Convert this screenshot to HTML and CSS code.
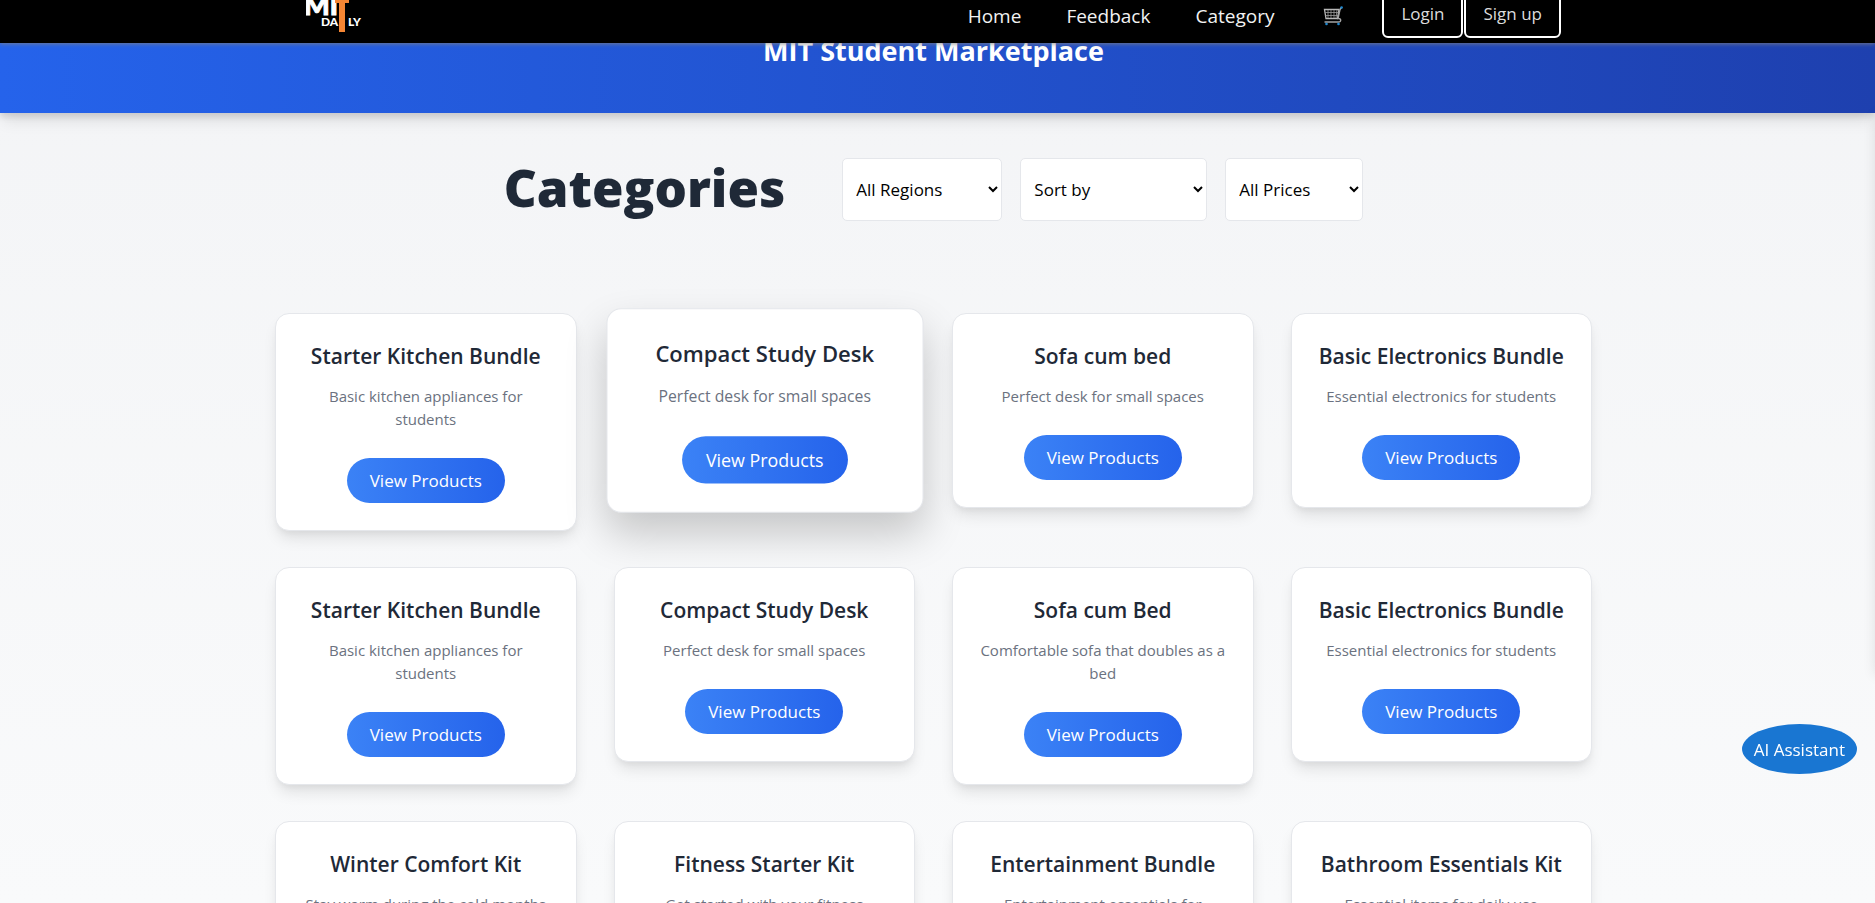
FILE: index.html
```html
<!DOCTYPE html>
<html lang="en">
<head>
<meta charset="utf-8">
<meta name="viewport" content="width=device-width, initial-scale=1">
<title>MIT Student Marketplace</title>
<link rel="stylesheet" href="styles.css">
</head>
<body>
<header class="navbar">
  <div class="navbar-inner">
    <a class="logo" href="#" aria-label="MIT Daily">
      <svg width="58" height="43" viewBox="0 0 58 43">
        <text class="logo-big" x="-2" y="15">MI</text>
        <rect x="29" y="0" width="14" height="3" fill="#f58634"/>
        <rect x="33" y="0" width="6" height="32" fill="#f58634"/>
        <text class="logo-small" x="15" y="26">DA</text>
        <text class="logo-small" x="42" y="26">LY</text>
      </svg>
    </a>
    <nav class="menu">
      <a href="#">Home</a>
      <a href="#">Feedback</a>
      <a href="#">Category</a>
      <a href="#" class="cart" aria-label="Cart">
        <svg width="20" height="20" viewBox="0 0 20 20" fill="none">
          <path d="M1.500 3.500H16L14.500 12.500H3z" stroke="#b8b8b8" stroke-width="1.300"/>
          <path d="M5 4v8M8 4v8M11 4v8M14 4l-1 8M2 6.500h13.500M2.500 9.500h12.500" stroke="#9a9a9a" stroke-width=".8"/>
          <path d="M18.500 1.500L17 3.500L15 12.500C18.500 12 18.500 16 15.500 16H1.500" stroke="#a5a5a5" stroke-width="1.400"/>
          <circle cx="3.500" cy="18" r="1.300" fill="#1e88d0"/>
          <circle cx="15.500" cy="18" r="1.300" fill="#1e88d0"/>
          <circle cx="18.600" cy="1.500" r="1.300" fill="#1e88d0"/>
        </svg>
      </a>
    </nav>
    <div class="auth">
      <button type="button" class="auth-button">Login</button>
      <button type="button" class="auth-button">Sign up</button>
    </div>
  </div>
</header>

<section class="banner">
  <h1 class="banner-title">MIT Student Marketplace</h1>
</section>

<main class="page">
  <div class="toolbar">
    <h2 class="page-title">Categories</h2>
    <div class="filters">
      <select class="filter" aria-label="Region"><option>All Regions</option></select>
      <select class="filter filter-sort" aria-label="Sort by"><option>Sort by</option></select>
      <select class="filter filter-price" aria-label="Price"><option>All Prices</option></select>
    </div>
  </div>

  <div class="grid">
    <article class="card"><h3>Starter Kitchen Bundle</h3><p>Basic kitchen appliances for students</p><button type="button">View Products</button></article>
    <article class="card card-active"><h3>Compact Study Desk</h3><p>Perfect desk for small spaces</p><button type="button">View Products</button></article>
    <article class="card"><h3>Sofa cum bed</h3><p>Perfect desk for small spaces</p><button type="button">View Products</button></article>
    <article class="card"><h3>Basic Electronics Bundle</h3><p>Essential electronics for students</p><button type="button">View Products</button></article>

    <article class="card"><h3>Starter Kitchen Bundle</h3><p>Basic kitchen appliances for students</p><button type="button">View Products</button></article>
    <article class="card"><h3>Compact Study Desk</h3><p>Perfect desk for small spaces</p><button type="button">View Products</button></article>
    <article class="card"><h3>Sofa cum Bed</h3><p>Comfortable sofa that doubles as a bed</p><button type="button">View Products</button></article>
    <article class="card"><h3>Basic Electronics Bundle</h3><p>Essential electronics for students</p><button type="button">View Products</button></article>

    <article class="card"><h3>Winter Comfort Kit</h3><p>Stay warm during the cold months</p><button type="button">View Products</button></article>
    <article class="card"><h3>Fitness Starter Kit</h3><p>Get started with your fitness journey</p><button type="button">View Products</button></article>
    <article class="card"><h3>Entertainment Bundle</h3><p>Entertainment essentials for students</p><button type="button">View Products</button></article>
    <article class="card"><h3>Bathroom Essentials Kit</h3><p>Essential items for daily use</p><button type="button">View Products</button></article>
  </div>
</main>

<aside class="drawer" aria-hidden="true"></aside>
<button type="button" class="assistant">AI Assistant</button>
</body>
</html>
```
FILE: styles.css
```css
* {
  box-sizing: border-box;
}

body {
  margin: 0;
  height: 100vh;
  overflow: hidden;
  font-family: "Open Sans", "Noto Sans", sans-serif;
  font-size: 17px;
  color: #1f2937;
  background: linear-gradient(to bottom, #f3f4f6, #f9fafb);
}

h1, h2, h3, p {
  margin: 0;
}

button, select {
  font: inherit;
}

.navbar {
  position: relative;
  z-index: 10;
  height: 43px;
  overflow: hidden;
  background: #000;
  box-shadow: 0 1px 4px rgba(128, 128, 128, 0.8);
}

.navbar-inner {
  display: flex;
  align-items: flex-end;
  height: 100%;
  padding: 0 314px 0 306px;
}

.logo {
  display: block;
  height: 43px;
  margin-right: auto;
}

.logo text {
  fill: #fff;
  font-family: Lato, sans-serif;
  font-weight: 900;
}

.logo .logo-big {
  font-size: 27px;
  stroke: #fff;
  stroke-width: 1px;
}

.logo-small {
  font-size: 12px;
}

.menu {
  display: flex;
  align-items: center;
  gap: 45px;
  height: 54px;
  margin-right: 39px;
}

.menu a {
  color: #f2f2f2;
  font-size: 19px;
  text-decoration: none;
}

.menu .cart {
  padding-left: 4px;
}

.cart svg {
  display: block;
}

.auth {
  display: flex;
  gap: 1px;
  padding-bottom: 5px;
}

.auth-button {
  height: 50px;
  padding: 0 17px;
  border: 2px solid #fff;
  border-radius: 6px;
  background: #000;
  color: #dcdcdc;
}

.banner {
  display: flow-root;
  height: 70px;
  background: linear-gradient(to right, #2563eb, #1e40af);
  box-shadow: 0 10px 15px -3px rgba(0, 0, 0, 0.1), 0 4px 6px rgba(0, 0, 0, 0.1);
}

.banner-title {
  padding-right: 8px;
  margin-top: -12px;
  color: #fff;
  font-size: 27px;
  font-weight: 700;
  line-height: 40px;
  text-align: center;
}

.page {
  padding: 45px 283px 0 275px;
}

.toolbar {
  display: flex;
  justify-content: center;
  align-items: center;
  gap: 57px;
  margin-bottom: 92px;
}

.page-title {
  padding-bottom: 5px;
  font-size: 51px;
  font-weight: 800;
  line-height: 58px;
}

.filters {
  display: flex;
  gap: 18px;
}

.filter {
  width: 160px;
  height: 63px;
  padding: 0 0 0 9px;
  border: 1px solid #e5e7eb;
  border-radius: 5px;
  background: #fff;
  color: #000;
}

.filter-sort {
  width: 187px;
}

.filter-price {
  width: 138px;
}

.grid {
  display: grid;
  grid-template-columns: repeat(4, 1fr);
  align-items: start;
  gap: 36px 37px;
}

.card {
  position: relative;
  padding: 27px;
  border: 1px solid #e5e7eb;
  border-radius: 14px;
  background: #fff;
  text-align: center;
  box-shadow: 0 10px 15px -3px rgba(0, 0, 0, 0.1), 0 4px 6px -2px rgba(0, 0, 0, 0.05);
}

.card-active {
  transform: scale(1.05);
  box-shadow: 0 20px 40px rgba(0, 0, 0, 0.2);
}

.card h3 {
  margin: 0 -10px;
  font-size: 21px;
  font-weight: 600;
  line-height: 30px;
}

.card p {
  margin: 14px 0 27px;
  color: #6b7280;
  font-size: 15px;
  line-height: 23px;
}

.card button {
  height: 45px;
  padding: 0 23px;
  border: 0;
  border-radius: 23px;
  background: linear-gradient(to right, #3b82f6, #2563eb);
  color: #fff;
  vertical-align: top;
}

.drawer {
  position: fixed;
  top: 115px;
  left: 100%;
  width: 300px;
  height: 560px;
  box-shadow: 0 0 12px rgba(0, 0, 0, 0.1);
}

.assistant {
  position: fixed;
  right: 18px;
  bottom: 129px;
  height: 50px;
  padding: 0 12px;
  border: 0;
  border-radius: 50%;
  background: #1976d2;
  color: #fff;
}
```
